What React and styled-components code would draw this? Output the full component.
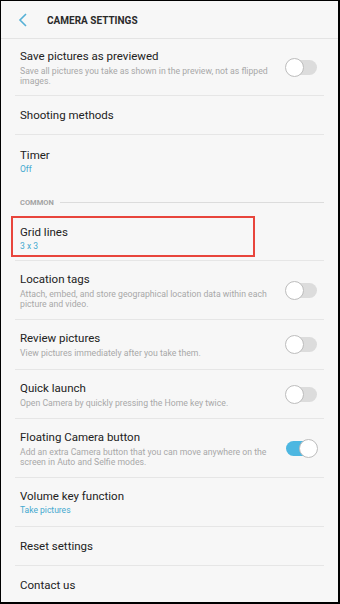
import React from 'react';
import styled, { createGlobalStyle } from 'styled-components';

const Global = createGlobalStyle`
  html, body { margin: 0; padding: 0; background: #fff; }
  body { font-family: Roboto, "Noto Sans", sans-serif; }
`;

const Frame = styled.div`
  width: 337px;
  height: 601px;
  border-top: 1px solid #000;
  border-left: 1px solid #000;
  border-right: 2px solid #000;
  border-bottom: 2px solid #000;
  background: #f7f7f7;
  overflow: hidden;
  display: flex;
  flex-direction: column;
`;

const Header = styled.header`
  height: 37px;
  flex-shrink: 0;
  display: flex;
  align-items: center;
  padding-left: 17px;
  border-bottom: 1px solid #e4e4e4;
`;

const Title = styled.h1`
  margin: 1px 0 0 19px;
  font-size: 10px;
  font-weight: 700;
  color: #2a2a2a;
`;

const List = styled.div`
  display: flex;
  flex-direction: column;
  padding: 0 14px;
`;

const Row = styled.div`
  position: relative;
  height: ${p => p.h}px;
  flex-shrink: 0;
  display: flex;
  align-items: center;
  padding: 0 5px;
  border-bottom: ${p => (p.last ? 'none' : '1px solid #e6e6e6')};
  box-sizing: border-box;
`;

const Texts = styled.div`
  flex: 1;
  min-width: 0;
  padding-right: 6px;
`;

const Label = styled.div`
  font-size: 11.5px;
  line-height: 15px;
  color: #222;
`;

const Desc = styled.div`
  font-size: 8.7px;
  line-height: 10px;
  margin-top: 2px;
  color: #a8a8a8;
`;

const Value = styled.div`
  font-size: 8.5px;
  line-height: 12px;
  margin-top: 0;
  color: #45a9cf;
`;

const Section = styled.div`
  height: 28px;
  display: flex;
  align-items: center;
  padding-left: 5px;
  gap: 6px;
  font-size: 7.5px;
  font-weight: 700;
  color: #a3a3a3;
  &::after {
    content: '';
    flex: 1;
    height: 1px;
    background: #dcdcdc;
  }
`;

const Track = styled.div`
  position: relative;
  width: 31px;
  height: 15px;
  border-radius: 8px;
  background: ${p => (p.on ? '#4db7e1' : '#dcdcdc')};
  flex-shrink: 0;
  margin-right: 2px;
`;

const Thumb = styled.div`
  position: absolute;
  top: -2px;
  left: ${p => (p.on ? '13px' : '-1px')};
  width: 17px;
  height: 17px;
  border-radius: 50%;
  background: #fff;
  border: 1px solid #bdbdbd;
`;

const Highlight = styled.div`
  position: absolute;
  left: -4px;
  top: 0;
  width: 240px;
  height: 37px;
  border: 2px solid #e8453c;
`;

const Toggle = ({ on }) => (
  <Track on={on}>
    <Thumb on={on} />
  </Track>
);

const Back = () => (
  <svg width="10" height="14" viewBox="0 0 10 14">
    <path d="M8 1 L2 7 L8 13" fill="none" stroke="#55b0d6" strokeWidth="1.6" />
  </svg>
);

const Item = ({ h, label, desc, value, toggle, last, children }) => (
  <Row h={h} last={last}>
    {children}
    <Texts>
      <Label>{label}</Label>
      {desc && <Desc>{desc}</Desc>}
      {value && <Value>{value}</Value>}
    </Texts>
    {toggle !== undefined && <Toggle on={toggle} />}
  </Row>
);

export default function App() {
  return (
    <>
      <Global />
      <Frame>
        <Header>
          <Back />
          <Title>CAMERA SETTINGS</Title>
        </Header>
        <List>
          <Item h={57} label="Save pictures as previewed" desc="Save all pictures you take as shown in the preview, not as flipped images." toggle={false} />
          <Item h={39} label="Shooting methods" />
          <Item h={53} label="Timer" value="Off" last />
          <Section>COMMON</Section>
          <Item h={45} label="Grid lines" value="3 x 3">
            <Highlight />
          </Item>
          <Item h={59} label="Location tags" desc="Attach, embed, and store geographical location data within each picture and video." toggle={false} />
          <Item h={50} label="Review pictures" desc="View pictures immediately after you take them." toggle={false} />
          <Item h={49} label="Quick launch" desc="Open Camera by quickly pressing the Home key twice." toggle={false} />
          <Item h={59} label="Floating Camera button" desc="Add an extra Camera button that you can move anywhere on the screen in Auto and Selfie modes." toggle={true} />
          <Item h={49} label="Volume key function" value="Take pictures" />
          <Item h={39} label="Reset settings" />
          <Item h={39} label="Contact us" last />
        </List>
      </Frame>
    </>
  );
}
